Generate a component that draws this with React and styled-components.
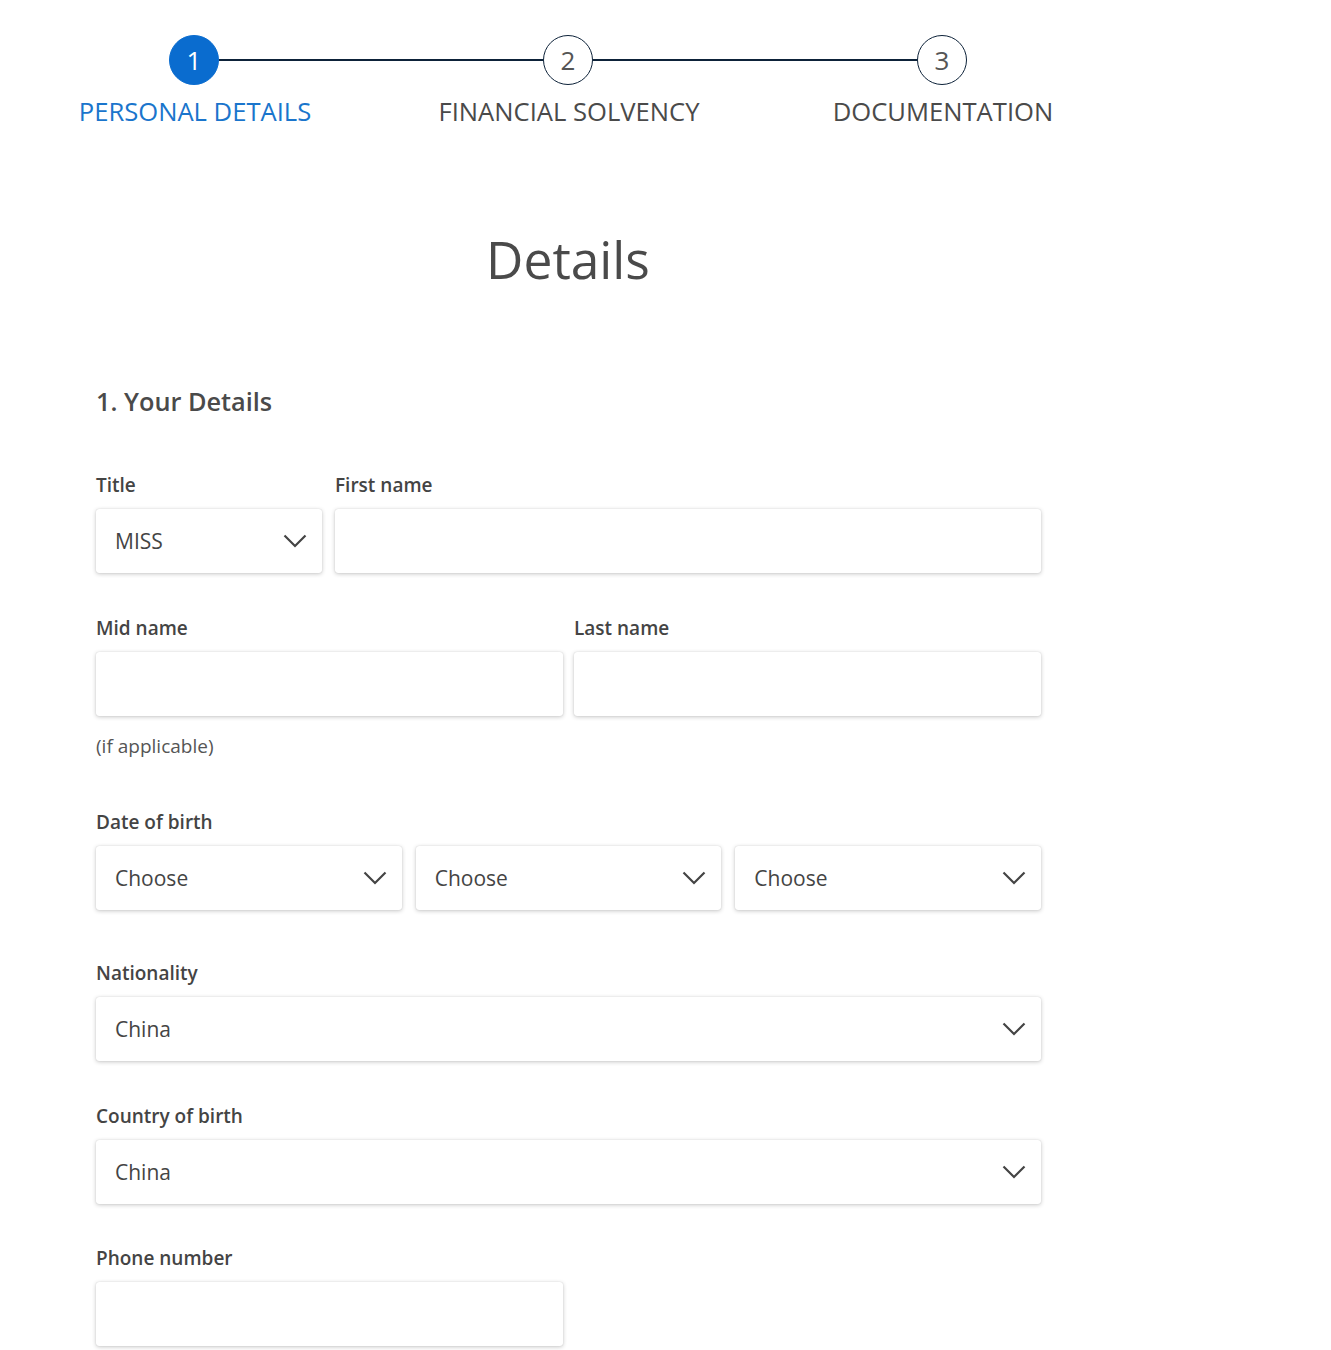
import React from "react";
import styled, { createGlobalStyle } from "styled-components";

const Global = createGlobalStyle`
  html, body { margin: 0; padding: 0; background: #fff; }
  body { margin: 8px; font-family: "Open Sans", "Noto Sans", sans-serif; color: #444; }
  * { box-sizing: border-box; }
`;

const Page = styled.div`
  width: 1120px;
`;

const CircleRow = styled.div`
  display: flex;
  align-items: center;
  padding-left: 161px;
  margin-top: 27px;
`;

const Circle = styled.div`
  width: 50px;
  height: 50px;
  border-radius: 50%;
  flex: none;
  display: flex;
  align-items: center;
  justify-content: center;
  font-size: 26px;
  line-height: 1;
  background: ${(p) => (p.$active ? "#0a6ccf" : "#fff")};
  color: ${(p) => (p.$active ? "#fff" : "#555")};
  border: 1px solid ${(p) => (p.$active ? "#0a6ccf" : "#0d2239")};
`;

const Line = styled.div`
  width: 324px;
  height: 2px;
  background: #0d2239;
  flex: none;
`;

const LabelRow = styled.div`
  display: grid;
  grid-template-columns: repeat(3, 374px);
  margin-top: 11px;
`;

const StepLabel = styled.div`
  text-align: center;
  font-size: 25.6px;
  line-height: 32px;
  color: ${(p) => (p.$active ? "#1a75cc" : "#4a4a4a")};
  white-space: nowrap;
`;

const PageTitle = styled.h1`
  margin: 101px 0 0;
  text-align: center;
  font-size: 51.5px;
  line-height: 60px;
  font-weight: 400;
  color: #4a4a4a;
`;

const Form = styled.div`
  margin-left: 88px;
  width: 945px;
  padding-bottom: 40px;
`;

const SectionTitle = styled.h2`
  margin: 96px 0 0;
  font-size: 25.3px;
  line-height: 32px;
  font-weight: 600;
  color: #4a4a4a;
`;

const Row = styled.div`
  display: grid;
  grid-template-columns: ${(p) => p.$cols};
  column-gap: ${(p) => p.$gap || "12px"};
  margin-top: ${(p) => p.$top};
`;

const Field = styled.div`
  display: flex;
  flex-direction: column;
`;

const Label = styled.label`
  font-size: 19px;
  line-height: 24px;
  font-weight: 600;
  color: #444;
  margin-bottom: 12px;
  white-space: nowrap;
`;

const TextInput = styled.input`
  height: 64px;
  width: 100%;
  border: none;
  border-radius: 3px;
  background: #fff;
  box-shadow: 0 1px 4px rgba(0, 0, 0, 0.22), 0 0 1px rgba(0, 0, 0, 0.18);
  font-family: inherit;
  font-size: 20px;
  color: #444;
  padding: 0 19px;
  outline: none;
`;

const SelectBox = styled.div`
  height: 64px;
  border-radius: 3px;
  background: #fff;
  box-shadow: 0 1px 4px rgba(0, 0, 0, 0.22), 0 0 1px rgba(0, 0, 0, 0.18);
  display: flex;
  align-items: center;
  justify-content: space-between;
  padding: 0 15px 0 19px;
  font-size: 21px;
  color: #444;
`;

const Hint = styled.div`
  margin-top: 18px;
  font-size: 19px;
  line-height: 24px;
  color: #555;
`;

const Chevron = () => (
  <svg width="24" height="14" viewBox="0 0 24 14" fill="none">
    <path d="M1.5 1.5 L12 12 L22.5 1.5" stroke="#444" strokeWidth="2.2" />
  </svg>
);

const Select = ({ value }) => (
  <SelectBox role="combobox">
    <span>{value}</span>
    <Chevron />
  </SelectBox>
);

export default function App() {
  return (
    <>
      <Global />
      <Page>
        <CircleRow>
          <Circle $active>1</Circle>
          <Line />
          <Circle>2</Circle>
          <Line />
          <Circle>3</Circle>
        </CircleRow>
        <LabelRow>
          <StepLabel $active>PERSONAL DETAILS</StepLabel>
          <StepLabel>FINANCIAL SOLVENCY</StepLabel>
          <StepLabel>DOCUMENTATION</StepLabel>
        </LabelRow>

        <PageTitle>Details</PageTitle>

        <Form>
          <SectionTitle>1. Your Details</SectionTitle>

          <Row $cols="226px 1fr" $gap="13px" $top="56px">
            <Field>
              <Label>Title</Label>
              <Select value="MISS" />
            </Field>
            <Field>
              <Label>First name</Label>
              <TextInput />
            </Field>
          </Row>

          <Row $cols="1fr 1fr" $gap="11px" $top="43px">
            <Field>
              <Label>Mid name</Label>
              <TextInput />
              <Hint>(if applicable)</Hint>
            </Field>
            <Field>
              <Label>Last name</Label>
              <TextInput />
            </Field>
          </Row>

          <Row $cols="1fr" $top="52px">
            <Field>
              <Label>Date of birth</Label>
              <Row $cols="1fr 1fr 1fr" $gap="14px" $top="0px">
                <Select value="Choose" />
                <Select value="Choose" />
                <Select value="Choose" />
              </Row>
            </Field>
          </Row>

          <Row $cols="1fr" $top="51px">
            <Field>
              <Label>Nationality</Label>
              <Select value="China" />
            </Field>
          </Row>

          <Row $cols="1fr" $top="43px">
            <Field>
              <Label>Country of birth</Label>
              <Select value="China" />
            </Field>
          </Row>

          <Row $cols="467px" $top="42px">
            <Field>
              <Label>Phone number</Label>
              <TextInput />
            </Field>
          </Row>
        </Form>
      </Page>
    </>
  );
}
